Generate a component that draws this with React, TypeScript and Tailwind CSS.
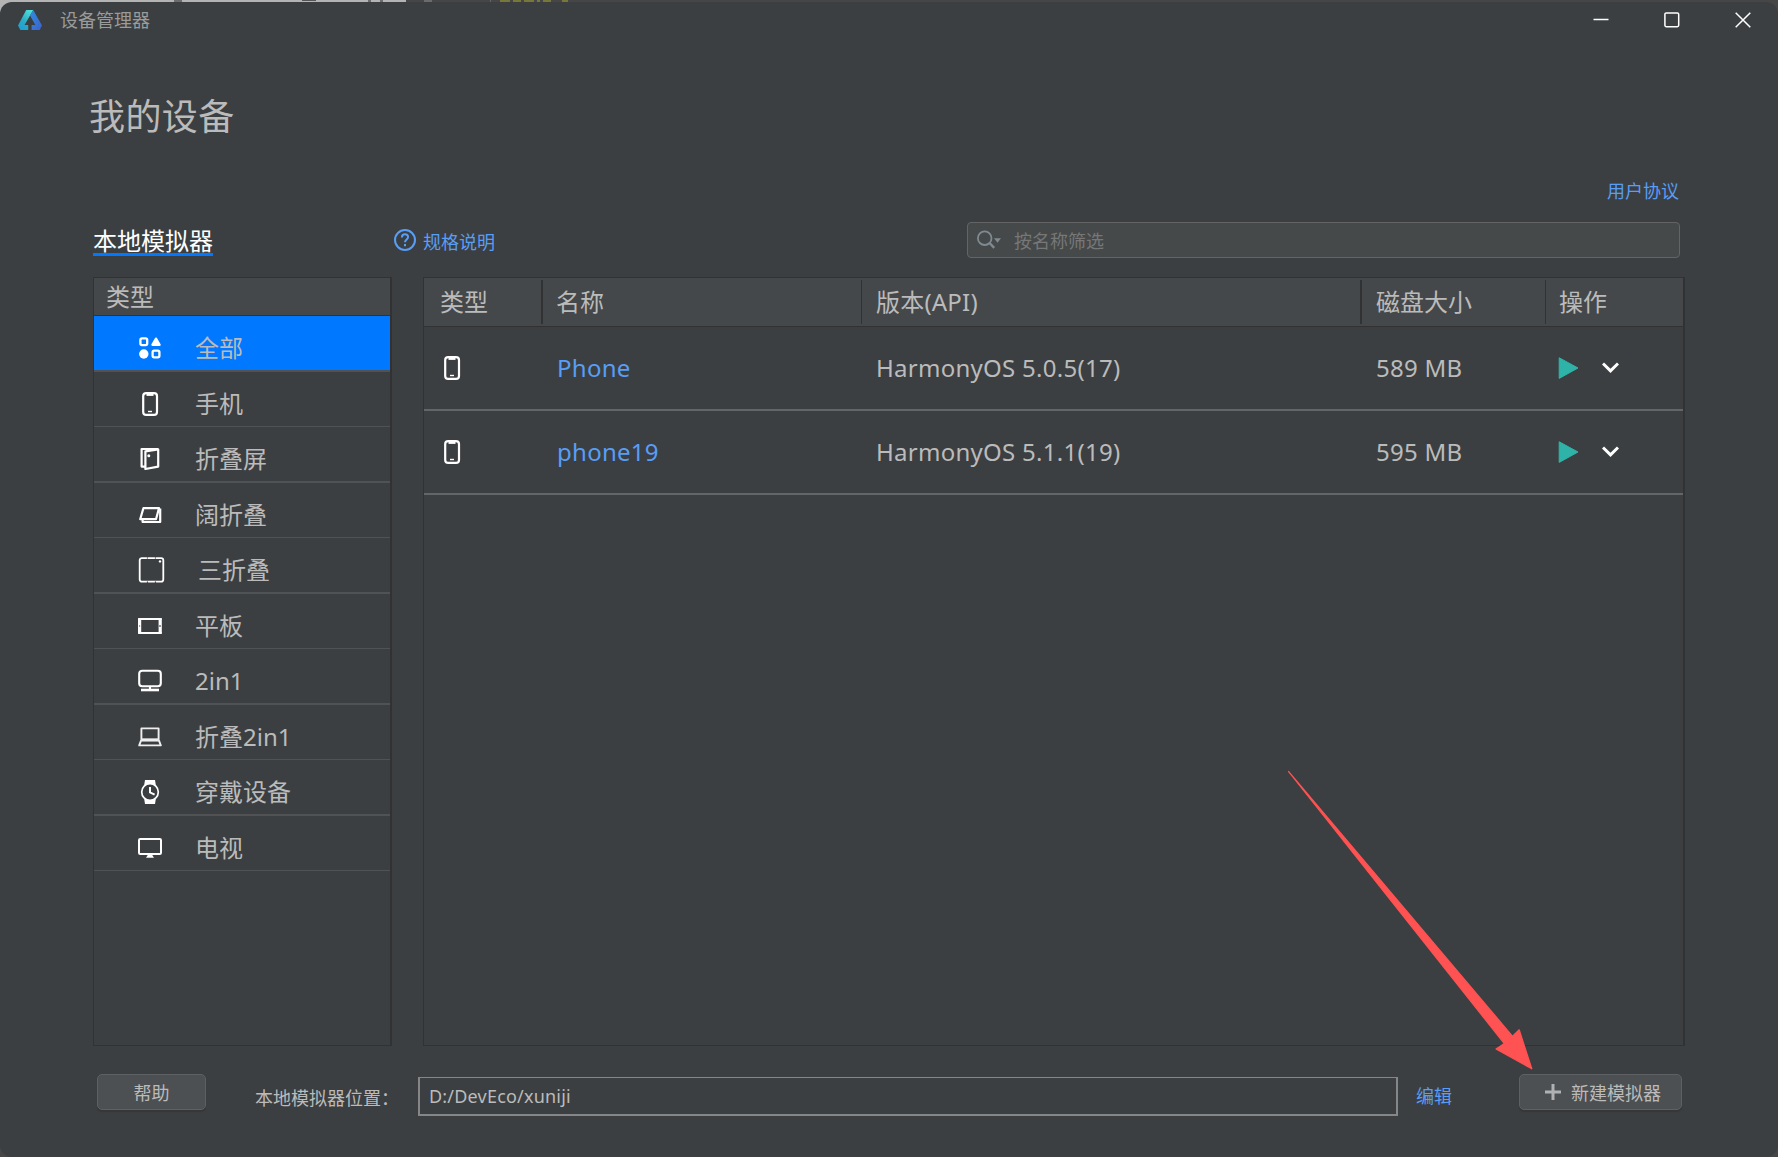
import { useState } from 'react'
import type { ReactNode } from 'react'
import clsx from 'clsx'

interface Category {
  id: string
  label: string
  icon: ReactNode
}

interface Device {
  name: string
  version: string
  size: string
}

function PhoneIcon() {
  return (
    <svg width="24" height="24" viewBox="0 0 24 24" fill="none" stroke="#fff">
      <rect x="5.2" y="1.1" width="13.8" height="21.8" rx="3" strokeWidth="2.2" />
      <path d="M8.5 2.7h7" strokeWidth="2.4" />
      <path d="M10 19.5h4" strokeWidth="1.4" />
    </svg>
  )
}

function AllIcon() {
  return (
    <svg width="24" height="24" viewBox="0 0 24 24" fill="none" stroke="#fff" strokeWidth="2.3">
      <rect x="2.4" y="2.3" width="6.8" height="6.8" rx="1.6" />
      <rect x="14.6" y="14.6" width="6.8" height="6.8" rx="1.6" />
      <circle cx="5.8" cy="18" r="4.7" fill="#fff" stroke="none" />
      <path d="M18 2.6l3.6 6.2h-7.2z" fill="#fff" strokeLinejoin="round" />
    </svg>
  )
}

function FoldIcon() {
  return (
    <svg width="24" height="24" viewBox="0 0 24 24" fill="none" stroke="#fff" strokeWidth="2.2" strokeLinejoin="round">
      <path d="M20 2H3.6v17.6H7" />
      <path d="M7.4 4.4L20.2 2.4v17.2L7.4 22z" />
      <circle cx="10.8" cy="8.8" r="1.5" fill="#fff" stroke="none" />
    </svg>
  )
}

function WideFoldIcon() {
  return (
    <svg width="24" height="24" viewBox="0 0 24 24" fill="none" stroke="#fff" strokeWidth="2.2" strokeLinejoin="round">
      <path d="M5.4 5.2H21l-3 11H2.2z" />
      <path d="M22.2 5.6v13.4H4.6v-2" />
    </svg>
  )
}

function TriFoldIcon() {
  return (
    <svg className="max-w-none shrink-0" width="27" height="26" viewBox="0 0 27 26" fill="none" stroke="#fff">
      <rect x="1.7" y="1.1" width="23.6" height="23.6" rx="2.2" strokeWidth="1.8" />
      <path d="M9.4 0.4v1.2M17.4 0.4v1.2M9.4 24.4V26M17.4 24.4V26" stroke="#3c3f41" strokeWidth="1" />
      <circle cx="22" cy="4.4" r="1.2" fill="#fff" stroke="none" />
    </svg>
  )
}

function TabletIcon() {
  return (
    <svg width="24" height="24" viewBox="0 0 24 24" fill="none" stroke="#fff">
      <path d="M0.4 5h23.2M0.4 19h23.2" strokeWidth="2.1" />
      <path d="M1.6 4.2v15.6M22.2 4.2v15.6" strokeWidth="3.2" />
      <path d="M22 11v2M1.6 11.4v1.2" stroke="#3c3f41" strokeWidth="1.1" />
    </svg>
  )
}

function DesktopIcon() {
  return (
    <svg width="24" height="24" viewBox="0 0 24 24" fill="none" stroke="#fff" strokeWidth="2.1">
      <rect x="1.2" y="1.7" width="21.6" height="15.6" rx="3" />
      <path d="M3 21h18" strokeWidth="2.6" />
      <path d="M12 17v4" />
    </svg>
  )
}

function LaptopIcon() {
  return (
    <svg width="24" height="24" viewBox="0 0 24 24" fill="none" stroke="#eee" strokeWidth="1.9" strokeLinejoin="round">
      <path d="M3.4 14.5V3.4h17.2v11.1z" />
      <path d="M3 15.6h18l1.8 4.8H1.2z" />
      <path d="M3.4 14.9h17.2" strokeWidth="2.4" />
    </svg>
  )
}

function WatchIcon() {
  return (
    <svg width="24" height="24" viewBox="0 0 24 24" fill="none" stroke="#fff">
      <path d="M6.2 5L7 0h10l.8 5zM6.2 19L7 24h10l.8-5z" fill="#fff" stroke="none" />
      <circle cx="12" cy="12" r="8.3" fill="#3c3f41" strokeWidth="1.7" />
      <path d="M12 7v5.4l4.6 2.3" strokeWidth="2" />
    </svg>
  )
}

function TvIcon() {
  return (
    <svg width="24" height="24" viewBox="0 0 24 24" fill="none" stroke="#fff">
      <rect x="1" y="3" width="22" height="15" rx="1.2" strokeWidth="2" />
      <path d="M10.4 18h3.2l2.4 3.8H8z" fill="#fff" stroke="none" />
    </svg>
  )
}

function Logo() {
  return (
    <svg width="24" height="20" viewBox="0 0 24 20">
      <defs>
        <linearGradient id="logo-left" x1="0.8" y1="0" x2="0.2" y2="1">
          <stop offset="0" stopColor="#4fe0dc" />
          <stop offset="0.6" stopColor="#2aa9c4" />
          <stop offset="1" stopColor="#1f9fd6" />
        </linearGradient>
        <linearGradient id="logo-right" x1="0" y1="0" x2="1" y2="1">
          <stop offset="0" stopColor="#2f8ee0" />
          <stop offset="1" stopColor="#3c62cc" />
        </linearGradient>
      </defs>
      <path d="M8.2 0h7L6.6 15h3.6v5H2.4L0 15.4z" fill="url(#logo-left)" />
      <path d="M15.2 0L24 15.4 21.6 20h-8v-5h3.8L12 5.6z" fill="url(#logo-right)" />
    </svg>
  )
}

const categories: Category[] = [
  { id: 'all', label: '全部', icon: <AllIcon /> },
  { id: 'phone', label: '手机', icon: <PhoneIcon /> },
  { id: 'foldable', label: '折叠屏', icon: <FoldIcon /> },
  { id: 'widefold', label: '阔折叠', icon: <WideFoldIcon /> },
  { id: 'triplefold', label: '三折叠', icon: <TriFoldIcon /> },
  { id: 'tablet', label: '平板', icon: <TabletIcon /> },
  { id: '2in1', label: '2in1', icon: <DesktopIcon /> },
  { id: '2in1-foldable', label: '折叠2in1', icon: <LaptopIcon /> },
  { id: 'wearable', label: '穿戴设备', icon: <WatchIcon /> },
  { id: 'tv', label: '电视', icon: <TvIcon /> },
]

const devices: Device[] = [
  { name: 'Phone', version: 'HarmonyOS 5.0.5(17)', size: '589 MB' },
  { name: 'phone19', version: 'HarmonyOS 5.1.1(19)', size: '595 MB' },
]

// Sliver of the editor window that shows above the title bar
function Backdrop() {
  return (
    <div className="absolute left-0 top-0 flex h-[20px] w-[640px] items-start">
      <div className="flex h-full w-[406px] items-start bg-[#b4b4b4]">
        <div className="ml-[174px] h-[2px] w-[8px] bg-[#6c6c6c]" />
        <div className="ml-[120px] h-px w-[14px] bg-[#555555]" />
        <div className="ml-[52px] h-[2px] w-[3px] bg-[#6c6c6c]" />
        <div className="ml-[9px] h-[2px] w-[3px] bg-[#6c6c6c]" />
      </div>
      <div className="ml-[18px] h-[2px] w-[8px] bg-[#6b6b6b]" />
      <div className="ml-[58px] h-[2px] w-px bg-[#666666]" />
      <div className="ml-[9px] flex h-[2px] gap-[3px]">
        <div className="w-[10px] bg-[#77773a]" />
        <div className="w-[8px] bg-[#77773a]" />
        <div className="w-[10px] bg-[#77773a]" />
        <div className="w-[3px] bg-[#77773a]" />
        <div className="w-[8px] bg-[#77773a]" />
        <div className="ml-[8px] w-[6px] bg-[#77773a]" />
      </div>
    </div>
  )
}

function TitleBar() {
  return (
    <header className="flex h-[36px] items-center pl-[18px] pr-[27px]">
      <Logo />
      <span className="-mt-px ml-[18px] text-[18px] leading-none text-[#9a9b9b]">设备管理器</span>
      <div className="-mt-px ml-auto flex gap-[55px]">
        <svg width="16" height="16" viewBox="0 0 16 16" stroke="#fff" strokeWidth="1.5">
          <path d="M0.5 7.5h15" />
        </svg>
        <svg width="16" height="16" viewBox="0 0 16 16" fill="none" stroke="#fff" strokeWidth="1.5">
          <rect x="0.9" y="0.9" width="13.8" height="13.8" rx="1.4" />
        </svg>
        <svg width="16" height="16" viewBox="0 0 16 16" stroke="#fff" strokeWidth="1.5">
          <path d="M0.7 0.7l14.6 14.6M15.3 0.7L0.7 15.3" />
        </svg>
      </div>
    </header>
  )
}

function Sidebar() {
  const [selected, setSelected] = useState('all')

  return (
    <aside className="flex h-[769px] w-[299px] flex-col border border-r-2 border-[#323232]">
      <div className="flex h-[38px] items-center border-b border-[#323232] bg-[#45484a] pl-[12px] text-[24px] leading-none">
        类型
      </div>
      <ul>
        {categories.map((item) => (
          <li
            key={item.id}
            onClick={() => setSelected(item.id)}
            className={clsx(
              'flex items-center border-[#505254] pt-[10px] odd:h-[56px] odd:border-b-2 even:h-[55px] even:border-b',
              selected === item.id && 'bg-[#0078ff] bg-clip-padding'
            )}
          >
            <span className="ml-[44px] flex w-[24px] shrink-0">{item.icon}</span>
            <span className={clsx('text-[24px] leading-none', item.id === 'triplefold' ? 'ml-[36px]' : 'ml-[33px]')}>
              {item.label}
            </span>
          </li>
        ))}
      </ul>
    </aside>
  )
}

function DeviceTable() {
  return (
    <section className="h-[769px] w-[1262px] border border-r-2 border-[#323232]">
      <div className="flex h-[49px] items-center border-b border-[#323232] bg-[#45484a] text-[24px] leading-none">
        <div className="flex h-[44px] w-[119px] items-center border-r-2 border-[#323232] pl-[16px]">类型</div>
        <div className="flex h-[44px] w-[319px] items-center border-r border-[#323232] pl-[13px]">名称</div>
        <div className="flex h-[44px] w-[500px] items-center border-r-2 border-[#323232] pl-[14px] tracking-[0.2px]">
          版本(API)
        </div>
        <div className="flex h-[44px] w-[184px] items-center border-r border-[#323232] pl-[14px]">磁盘大小</div>
        <div className="pl-[13px]">操作</div>
      </div>
      {devices.map((device) => (
        <div
          key={device.name}
          className="flex h-[84px] items-center border-b-2 border-[#646566] text-[24px] leading-none tracking-[0.27px]"
        >
          <div className="w-[119px] pl-[16px]">
            <PhoneIcon />
          </div>
          <div className="w-[319px] pl-[14px] text-[#589df6]">{device.name}</div>
          <div className="w-[500px] pl-[14px]">{device.version}</div>
          <div className="w-[184px] pl-[14px]">{device.size}</div>
          <div className="flex items-center gap-[23px] pl-[12px]">
            <svg width="21" height="22" viewBox="0 0 21 22" fill="#2fb3a8" stroke="#2fb3a8" strokeLinejoin="round">
              <path d="M1.2 0.8L20 11 1.2 21.4z" />
            </svg>
            <svg width="17" height="12" viewBox="0 0 17 12" fill="none" stroke="#fff" strokeWidth="3">
              <path d="M1 1.5l7.5 7.3L16 1.5" />
            </svg>
          </div>
        </div>
      ))}
    </section>
  )
}

function Footer() {
  return (
    <footer className="mt-[28px] flex items-start pl-[4px]">
      <button className="h-[36px] w-[109px] rounded-[5px] border border-[#5e6163] bg-[#4c5052] pt-[2px] text-[18px] leading-none shadow-[0_2px_1px_#353739]">
        帮助
      </button>
      <span className="ml-[49px] mt-[15px] w-[163px] text-[18px] leading-none">本地模拟器位置：</span>
      <div className="mt-[3px] flex h-[39px] w-[980px] items-center border-2 border-t border-[#868686] pl-[9px] text-[18px] leading-none tracking-[0.2px]">
        D:/DevEco/xuniji
      </div>
      <a className="ml-[18px] mt-[13px] text-[18px] leading-none text-[#589df6]">编辑</a>
      <button className="ml-[67px] flex h-[36px] w-[163px] items-center rounded-[5px] border border-[#5e6163] bg-[#4c5052] pl-[25px] pt-[2px] text-[18px] leading-none shadow-[0_2px_1px_#353739]">
        <svg className="-mt-[3px] mr-[10px]" width="16" height="16" viewBox="0 0 16 16" stroke="#afb1b3" strokeWidth="3">
          <path d="M0 8h16M8 0v16" />
        </svg>
        新建模拟器
      </button>
    </footer>
  )
}

function App() {
  return (
    <div
      lang="zh-CN"
      className="relative h-[1157px] w-[1778px] overflow-hidden bg-[#464646] pt-[2px] font-['Noto_Sans','Noto_Sans_CJK_SC',sans-serif] text-[#bbbbbb]"
    >
      <Backdrop />
      <div className="relative h-[1155px] rounded-[12px] bg-[#3c3f41]">
        <TitleBar />
        <main className="pl-[93px]">
          <h1 className="-ml-[4px] mt-[61px] text-[36px] leading-[36px] tracking-[0.4px]">我的设备</h1>
          <div className="mt-[47px] flex w-[1586px] justify-end">
            <a className="text-[18px] leading-[18px] text-[#589df6]">用户协议</a>
          </div>
          <div className="mt-[22px] flex h-[36px] w-[1587px]">
            <div className="mt-[6px] h-[28px] w-[120px] border-b-[3px] border-[#0078ff] text-[24px] leading-[25px] text-white">
              本地模拟器
            </div>
            <a className="ml-[181px] mt-[7px] flex h-[22px] items-center gap-[7px] text-[18px] leading-none text-[#589df6]">
              <svg width="22" height="22" viewBox="0 0 22 22" fill="none" stroke="#589df6" strokeWidth="2">
                <circle cx="11" cy="11" r="10" />
                <path d="M7.9 8.4c0-1.9 1.4-3.2 3.1-3.2s3.1 1.2 3.1 2.9c0 2.2-3.1 2.5-3.1 5.2" />
                <path d="M11 15v2.2" />
              </svg>
              <span className="mt-[4px]">规格说明</span>
            </a>
            <div className="ml-auto flex w-[713px] items-center rounded-[4px] border border-[#646464] bg-[#45494a] pl-[9px]">
              <svg width="25" height="20" viewBox="0 0 25 20" fill="none" stroke="#7f8b91" strokeWidth="1.8">
                <circle cx="7.7" cy="8.2" r="6.8" />
                <path d="M12.6 13l4.6 4.8" strokeWidth="2.4" />
                <path d="M17 8.2h7l-3.5 4.6z" fill="#7f8b91" stroke="none" />
              </svg>
              <span className="ml-[12px] mt-[2px] text-[18px] leading-none text-[#777777]">按名称筛选</span>
            </div>
          </div>
          <div className="mt-[19px] flex gap-[31px]">
            <Sidebar />
            <DeviceTable />
          </div>
          <Footer />
        </main>
      </div>
      {/* Pointer to the create button */}
      <svg className="pointer-events-none absolute left-[1280px] top-[762px]" width="260" height="316" viewBox="0 0 260 316">
        <path
          d="M8.5 9.5L232.6 274.3L239.2 267.8L251.8 306.8L216 287L224.3 281.6Z"
          fill="#ff5252"
          stroke="#ff5252"
          strokeWidth="1.2"
          strokeLinejoin="round"
        />
      </svg>
    </div>
  )
}

export default App
